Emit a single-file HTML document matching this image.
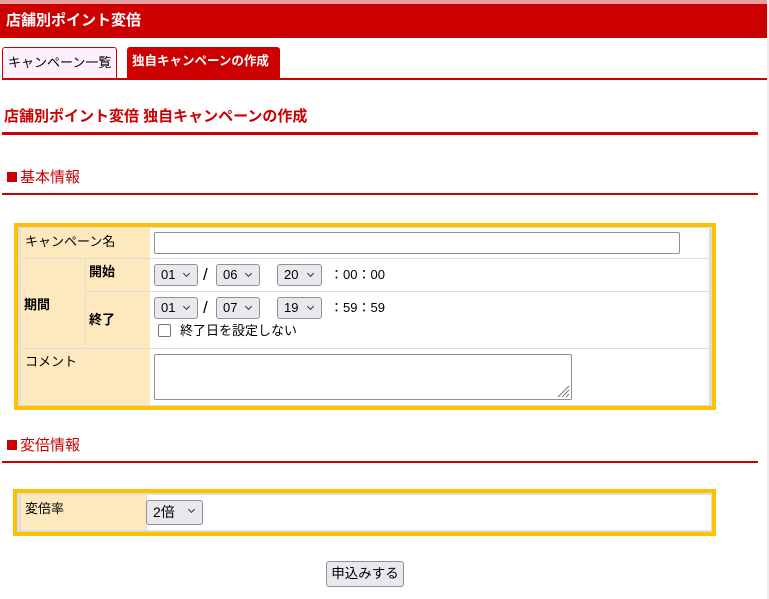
<!DOCTYPE html>
<html><head><meta charset="utf-8"><style>
*{margin:0;padding:0;box-sizing:border-box}
body{width:769px;height:599px;position:relative;background:#fff;font-family:"Liberation Sans","Noto Sans CJK JP",sans-serif;font-size:13px;color:#000;overflow:hidden}
.a{position:absolute}
.sel{position:absolute;background:#e9e9ed;border:1px solid #8f8f9d;border-radius:3px;font-size:13px;padding-left:6px;line-height:20px}
.sel:after{content:"";position:absolute;right:8px;top:6px;width:4px;height:4px;border-right:1.5px solid #333;border-bottom:1.5px solid #333;transform:rotate(45deg)}
.lab{position:absolute;background:#fee8bd}
.h{position:absolute;left:0;right:0;height:1px;background:#ddd}
.sq{display:inline-block;width:10px;height:10px;background:#cc0000;margin-right:3px;vertical-align:0}
</style></head><body>
<div class="a" style="left:0;top:0;width:769px;height:4px;background:#e8a0a0"></div>
<div class="a" style="left:0;top:4px;width:767px;height:34px;background:#cc0000;color:#fff;font-weight:bold;font-size:15px;line-height:34px;padding-left:6px">店舗別ポイント変倍</div>
<div class="a" style="left:767px;top:0;width:2px;height:599px;background:#eee"></div>
<div class="a" style="left:2px;top:47px;width:115px;height:32px;background:#fdf0fd;border:1px solid #cc0000;border-bottom:none;border-radius:3px 3px 0 0;line-height:29px;padding-left:5px;font-size:13px">キャンペーン一覧</div>
<div class="a" style="left:127px;top:47px;width:153px;height:32px;background:#cc0000;color:#fff;border-radius:3px 3px 0 0;line-height:29px;padding-left:5px;font-weight:bold;font-size:12.5px">独自キャンペーンの作成</div>
<div class="a" style="left:2px;top:78px;width:765px;height:2px;background:#cc0000"></div>
<div class="a" style="left:4px;top:107px;color:#cc0000;font-weight:bold;font-size:15px;line-height:20px">店舗別ポイント変倍 独自キャンペーンの作成</div>
<div class="a" style="left:2px;top:132px;width:756px;height:3px;background:#cc0000"></div>
<div class="a" style="left:7px;top:168px;color:#cc0000;font-size:15px;line-height:20px"><span class="sq"></span>基本情報</div>
<div class="a" style="left:2px;top:193px;width:756px;height:2px;background:#cc0000"></div>

<div class="a" style="left:14px;top:223px;width:702px;height:187px;border:4px solid #ffc000;background:#ddd">
 <div class="a" style="left:3px;top:1px;width:688px;height:177px;background:#fff">
  <div class="lab" style="left:0;top:0;width:129px;height:30px"></div>
  <div class="lab" style="left:0;top:31px;width:64px;height:89px"></div>
  <div class="lab" style="left:65px;top:31px;width:64px;height:32px"></div>
  <div class="lab" style="left:65px;top:64px;width:64px;height:56px"></div>
  <div class="lab" style="left:0;top:121px;width:129px;height:56px"></div>
  <div class="h" style="top:30px"></div><div class="h" style="top:63px;left:65px"></div><div class="h" style="top:120px"></div>
  <div class="a" style="left:64px;top:31px;width:1px;height:89px;background:#ddd"></div>
 </div>
</div>
<div class="a" style="left:25px;top:232px;line-height:20px">キャンペーン名</div>
<div class="a" style="left:24px;top:295px;line-height:20px;font-weight:bold">期間</div>
<div class="a" style="left:89px;top:262px;line-height:20px;font-weight:bold">開始</div>
<div class="a" style="left:89px;top:310px;line-height:20px;font-weight:bold">終了</div>
<div class="a" style="left:25px;top:352px;line-height:20px">コメント</div>
<div class="a" style="left:154px;top:232px;width:526px;height:22px;border:1px solid #8f8f9d;border-radius:2px"></div>
<div class="sel" style="left:154px;top:264px;width:44px;height:22px">01</div>
<div class="a" style="left:203px;top:264px;font-size:17px;line-height:22px">/</div>
<div class="sel" style="left:216px;top:264px;width:44px;height:22px">06</div>
<div class="sel" style="left:277px;top:264px;width:45px;height:22px">20</div>
<div class="a" style="left:330px;top:265px;line-height:20px">：00：00</div>
<div class="sel" style="left:154px;top:297px;width:44px;height:22px">01</div>
<div class="a" style="left:203px;top:297px;font-size:17px;line-height:22px">/</div>
<div class="sel" style="left:216px;top:297px;width:44px;height:22px">07</div>
<div class="sel" style="left:277px;top:297px;width:45px;height:22px">19</div>
<div class="a" style="left:330px;top:298px;line-height:20px">：59：59</div>
<div class="a" style="left:158px;top:324px;width:13px;height:13px;border:1px solid #767676;border-radius:2px"></div>
<div class="a" style="left:180px;top:321px;line-height:20px">終了日を設定しない</div>
<div class="a" style="left:154px;top:354px;width:418px;height:46px;border:1px solid #8f8f9d;border-radius:2px"></div>
<svg class="a" style="left:556px;top:384px" width="14" height="14"><path d="M13 2L2 13M13 6L6 13M13 10L10 13" stroke="#777" stroke-width="1"/></svg>

<div class="a" style="left:7px;top:436px;color:#cc0000;font-size:15px;line-height:20px"><span class="sq"></span>変倍情報</div>
<div class="a" style="left:2px;top:461px;width:756px;height:2px;background:#cc0000"></div>
<div class="a" style="left:13px;top:489px;width:703px;height:47px;border:4px solid #ffc000;background:#ddd">
 <div class="lab" style="left:4px;top:2px;width:125px;height:35px"></div>
 <div class="a" style="left:130px;top:2px;width:564px;height:35px;background:#fff"></div>
</div>
<div class="a" style="left:25px;top:499px;line-height:20px">変倍率</div>
<div class="sel" style="left:146px;top:500px;width:57px;height:25px;line-height:23px;font-size:14px">2倍</div>
<div class="a" style="left:326px;top:561px;width:78px;height:26px;background:#e9e9ed;border:1px solid #8f8f9d;border-radius:3px;text-align:center;line-height:24px;font-size:13.5px">申込みする</div>
</body></html>
